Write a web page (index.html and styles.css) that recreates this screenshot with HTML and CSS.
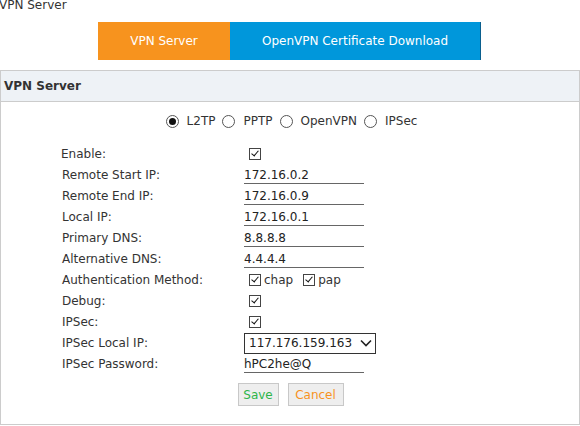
FILE: index.html
```html
<!DOCTYPE html>
<html>
<head>
<meta charset="utf-8">
<link rel="stylesheet" href="styles.css">
</head>
<body>
<div class="page-title">VPN Server</div>
<div class="tabs">
  <div class="tab tab-active">VPN Server</div>
  <div class="tab tab-blue">OpenVPN Certificate Download</div>
</div>
<div class="panel">
  <div class="panel-head">VPN Server</div>
  <div class="radios">
    <span class="radio on"></span><span class="rlabel">L2TP</span>
    <span class="radio"></span><span class="rlabel">PPTP</span>
    <span class="radio"></span><span class="rlabel">OpenVPN</span>
    <span class="radio"></span><span class="rlabel">IPSec</span>
  </div>
  <div class="form">
    <div class="row"><div class="label">Enable:</div><div class="val"><span class="cb"></span></div></div>
    <div class="row"><div class="label">Remote Start IP:</div><div class="val"><span class="input">172.16.0.2</span></div></div>
    <div class="row"><div class="label">Remote End IP:</div><div class="val"><span class="input">172.16.0.9</span></div></div>
    <div class="row"><div class="label">Local IP:</div><div class="val"><span class="input">172.16.0.1</span></div></div>
    <div class="row"><div class="label">Primary DNS:</div><div class="val"><span class="input">8.8.8.8</span></div></div>
    <div class="row"><div class="label">Alternative DNS:</div><div class="val"><span class="input">4.4.4.4</span></div></div>
    <div class="row"><div class="label">Authentication Method:</div><div class="val"><span class="cb"></span><span class="cblabel">chap</span><span class="cb"></span><span class="cblabel">pap</span></div></div>
    <div class="row"><div class="label">Debug:</div><div class="val"><span class="cb"></span></div></div>
    <div class="row"><div class="label">IPSec:</div><div class="val"><span class="cb"></span></div></div>
    <div class="row"><div class="label">IPSec Local IP:</div><div class="val"><span class="select">117.176.159.163<svg class="chev" width="12" height="8" viewBox="0 0 12 8"><path d="M1 1.5 L6 6.5 L11 1.5" fill="none" stroke="#222" stroke-width="1.6"/></svg></span></div></div>
    <div class="row"><div class="label">IPSec Password:</div><div class="val"><span class="input">hPC2he@Q</span></div></div>
  </div>
  <div class="buttons">
    <span class="btn btn-save">Save</span>
    <span class="btn btn-cancel">Cancel</span>
  </div>
</div>
</body>
</html>
```
FILE: styles.css
```css
html, body {
  margin: 0;
  padding: 0;
  background: #fff;
}
body {
  font-family: "DejaVu Sans", Verdana, sans-serif;
  font-size: 12px;
  color: #333;
  width: 580px;
  height: 426px;
  overflow: hidden;
}
.page-title {
  height: 12px;
  line-height: 12px;
  margin-top: -1px;
  margin-left: -1px;
  color: #333;
}
.tabs {
  display: flex;
  margin-top: 11px;
  margin-left: 98px;
  height: 38px;
}
.tab {
  display: flex;
  align-items: center;
  justify-content: center;
  color: #fff;
  font-size: 12px;
}
.tab-active {
  width: 132px;
  background: #f7931e;
}
.tab-blue {
  width: 250px;
  background: #0097db;
  border-right: 1px solid #0a5f8e;
}
.panel {
  margin-top: 10px;
  width: 578px;
  height: 353px;
  border: 1px solid #cccccc;
}
.panel-head {
  height: 30px;
  line-height: 31px;
  background: #eef2f6;
  border-bottom: 1px solid #cccccc;
  font-weight: bold;
  font-size: 12px;
  padding-left: 3px;
  color: #333;
}
.radios {
  display: flex;
  align-items: center;
  justify-content: center;
  height: 20px;
  margin-top: 9px;
  padding-left: 3px;
}
.radio {
  width: 11px;
  height: 11px;
  border: 1px solid #555;
  border-radius: 50%;
  box-sizing: content-box;
  display: inline-flex;
  align-items: center;
  justify-content: center;
  margin-right: 8px;
  background: #fff;
}
.radio.on::after {
  content: "";
  width: 7px;
  height: 7px;
  border-radius: 50%;
  background: #111;
}
.rlabel {
  margin-right: 7px;
}
.rlabel:last-child {
  margin-right: 0;
}
.form {
  margin-top: 12px;
  padding-left: 61px;
}
.row {
  display: flex;
  align-items: center;
  height: 21px;
}
.label {
  width: 182px;
}
.row:first-child .label {
  margin-left: -1px;
  width: 183px;
}
.val {
  display: flex;
  align-items: center;
}
.cb {
  width: 10px;
  height: 10px;
  border: 1px solid #444;
  margin-left: 5px;
  margin-right: 3px;
  position: relative;
  background: #fff;
}
.cb::after {
  content: "";
  position: absolute;
  left: 3px;
  top: 0px;
  width: 3px;
  height: 6px;
  border-right: 1.6px solid #111;
  border-bottom: 1.6px solid #111;
  transform: rotate(40deg);
}
.cblabel {
  margin-right: 5px;
  font-size: 12px;
}
.input {
  display: block;
  width: 120px;
  height: 18px;
  line-height: 20px;
  border-bottom: 1px solid #666;
  font-size: 12px;
  color: #222;
}
.select {
  display: flex;
  align-items: center;
  justify-content: space-between;
  width: 126px;
  height: 19px;
  border: 1px solid #333;
  padding-left: 4px;
  font-size: 12px;
  color: #222;
  margin-top: 1px;
}
.chev {
  margin-right: 3px;
}
.buttons {
  display: flex;
  justify-content: center;
  gap: 9px;
  margin-top: 9px;
  padding-left: 1px;
}
.btn {
  display: flex;
  align-items: center;
  justify-content: center;
  height: 21px;
  border: 1px solid #c8c8c8;
  background: #eeeeee;
  font-size: 12px;
}
.btn-save {
  width: 39px;
  color: #2db54a;
}
.btn-cancel {
  width: 54px;
  color: #f7931e;
}
```
